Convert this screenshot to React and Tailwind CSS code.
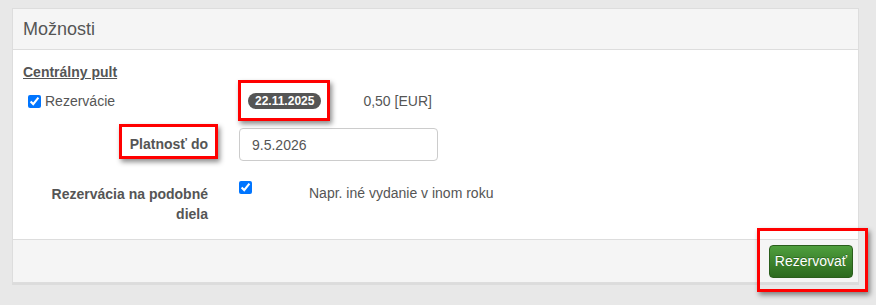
import React from 'react'

const font = { fontFamily: '"Liberation Sans", Arial, sans-serif' }

// red annotation frame drawn over the form
const Highlight = ({ className }) => (
  <div className={`absolute border-[3px] border-[#ff0000] shadow-[2px_3px_5px_rgba(0,0,0,0.45)] pointer-events-none ${className}`} />
)

const App = () => {
  return (
    <div className="relative w-[876px] h-[305px] bg-[#e8e8e8] pt-[8px] pl-[12px] text-[14px] text-[#555]" style={font}>
      {/* Panel */}
      <div className="w-[847px] bg-white border border-[#dddddd] shadow-[0_2px_0_#dcdcdc]">
        <div className="h-[41px] bg-[#f5f5f5] border-b border-[#dddddd] flex items-center px-[10px]">
          <h3 className="text-[18px] text-[#555]">Možnosti</h3>
        </div>

        <div className="pt-[13px] pb-[15px] pl-[10px]">
          <div className="h-[18px] leading-[18px] font-bold underline">Centrálny pult</div>

          <div className="mt-[10px] h-[20px] flex items-center">
            <label className="w-[216px] pl-[5px] flex items-center gap-[4px]">
              <input type="checkbox" defaultChecked className="w-[13px] h-[13px] m-0" />
              <span>Rezervácie</span>
            </label>
            <span className="ml-[9px] px-[7px] h-[16px] leading-[16px] rounded-full bg-[#555] text-white text-[12px] font-bold">22.11.2025</span>
            <span className="ml-[42px] text-[14px]">0,50 [EUR]</span>
          </div>

          <div className="mt-[17px] flex items-center">
            <div className="w-[185px] text-right font-bold">Platnosť do</div>
            <input
              type="text"
              defaultValue="9.5.2026"
              className="ml-[31px] w-[199px] h-[33px] px-[12px] border border-[#cccccc] rounded-[4px] text-[14px] text-[#555] outline-none"
              style={font}
            />
          </div>

          <div className="mt-[19px] flex items-start">
            <div className="w-[185px] pt-[4px] leading-[20px] text-right font-bold">Rezervácia na podobné<br />diela</div>
            <input type="checkbox" defaultChecked className="ml-[31px] mt-[1px] w-[13px] h-[13px]" />
            <span className="ml-[57px] pt-[3px] leading-[20px]">Napr. iné vydanie v inom roku</span>
          </div>
        </div>

        <div className="h-[43px] bg-[#f5f5f5] border-t border-[#dddddd] flex items-center justify-end pr-[5px]">
          <button
            className="h-[33px] px-[5px] rounded-[4px] border border-[#2a5e1c] bg-gradient-to-b from-[#4f9f3d] to-[#2c6a1e] text-white text-[14px] [text-shadow:0_-1px_0_rgba(0,0,0,0.25)]"
            style={font}
          >
            Rezervovať
          </button>
        </div>
      </div>

      <Highlight className="left-[238px] top-[80px] w-[92px] h-[41px]" />
      <Highlight className="left-[119px] top-[124px] w-[99px] h-[35px]" />
      <Highlight className="left-[757px] top-[228px] w-[111px] h-[64px]" />
    </div>
  )
}

export default App
